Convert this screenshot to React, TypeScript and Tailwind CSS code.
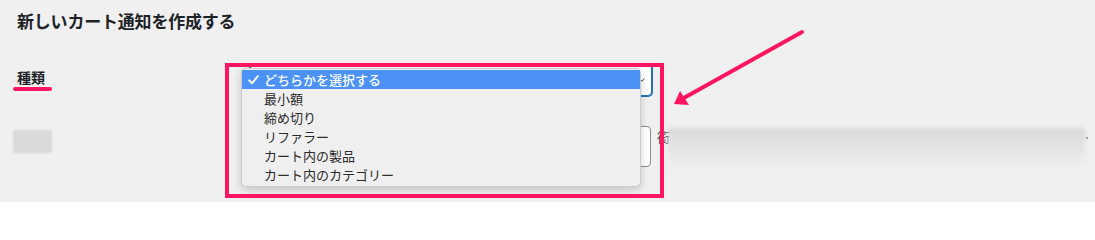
import React from "react";

const options = ["最小額", "締め切り", "リファラー", "カート内の製品", "カート内のカテゴリー"];

export default function App() {
  return (
    <div className="relative w-[1095px] h-[202px] overflow-hidden bg-[#f0f0f1] font-['Noto_Sans_CJK_JP','Noto_Sans',sans-serif] text-[#1d2327]">
      <div className="pl-[17px] pt-[9px]">
        <h2 className="text-[17px] leading-[24px] font-semibold tracking-[-0.2px]">新しいカート通知を作成する</h2>

        {/* 種類 row */}
        <div className="flex mt-[31px] h-[32px]">
          <div className="w-[233px] pt-0">
            <span className="text-[14px] leading-[20px] font-semibold">種類</span>
          </div>
          <div className="relative w-[402px] h-[32px] rounded-[4px] border border-[#2271b1] shadow-[0_0_0_1px_#2271b1] bg-white">
            <svg className="absolute right-[6px] top-[13px]" width="6" height="4" viewBox="0 0 6 4">
              <path d="M0.5 0.5 L3 3.2 L5.5 0.5" fill="none" stroke="#50575e" strokeWidth="1" />
            </svg>
          </div>
        </div>

        {/* second row */}
        <div className="flex mt-[30px] h-[41px]">
          <div className="w-[233px] -ml-[4px] pt-[4px]">
            <div className="w-[39px] h-[23px] bg-[#d9d9d9] blur-[1px]" />
          </div>
          <div className="w-[401px] h-[41px] rounded-[4px] border border-[#8c8f94] bg-white ml-[4px]" />
          <div className="flex items-start ml-[6px] pt-[2px]">
            <span className="text-[13px] leading-[18px] text-[#3c434a]">銜</span>
            <div className="w-[417px] h-[40px] -ml-[2px] bg-gradient-to-b from-[#d8d8d8] via-[#e4e4e4] to-[#efefef] blur-[2px]" />
            <span className="ml-[1px] mt-[9px] w-[2px] h-[2px] rounded-full bg-[#777]" />
          </div>
        </div>
      </div>

      {/* underline annotation */}
      <div className="absolute left-[13px] top-[87px] w-[39px] h-[4px] rounded-full bg-[#ff1560]" />

      {/* open select menu */}
      <div className="absolute left-[241px] top-[68px] w-[400px] h-[119px] rounded-[5px] bg-[#efefef] border border-[#cbcbcb] shadow-[0_3px_8px_rgba(0,0,0,0.18)] pt-[1px] text-[13px]">
        <div className="flex items-center h-[19px] bg-[#4c92f6] text-white font-medium">
          <svg className="ml-[6px] mr-[5px]" width="11" height="10" viewBox="0 0 11 10">
            <path d="M1.2 5.4 L4 8.3 L9.8 1.2" fill="none" stroke="white" strokeWidth="2" strokeLinecap="round" strokeLinejoin="round" />
          </svg>
          <span className="leading-[19px]">どちらかを選択する</span>
        </div>
        {options.map((o) => (
          <div key={o} className="h-[19px] leading-[19px] pl-[22px] text-[#2b2b2b]">{o}</div>
        ))}
      </div>

      {/* red highlight box */}
      <div className="absolute left-[225px] top-[63px] w-[439px] h-[135px] border-[4px] border-[#ff1560]" />

      {/* arrow */}
      <svg className="absolute left-0 top-0" width="1095" height="202" viewBox="0 0 1095 202">
        <line x1="802" y1="32" x2="682" y2="99" stroke="#ff1560" strokeWidth="4" strokeLinecap="round" />
        <polygon points="674,104 680,91 689,105" fill="#ff1560" />
      </svg>
    </div>
  );
}
